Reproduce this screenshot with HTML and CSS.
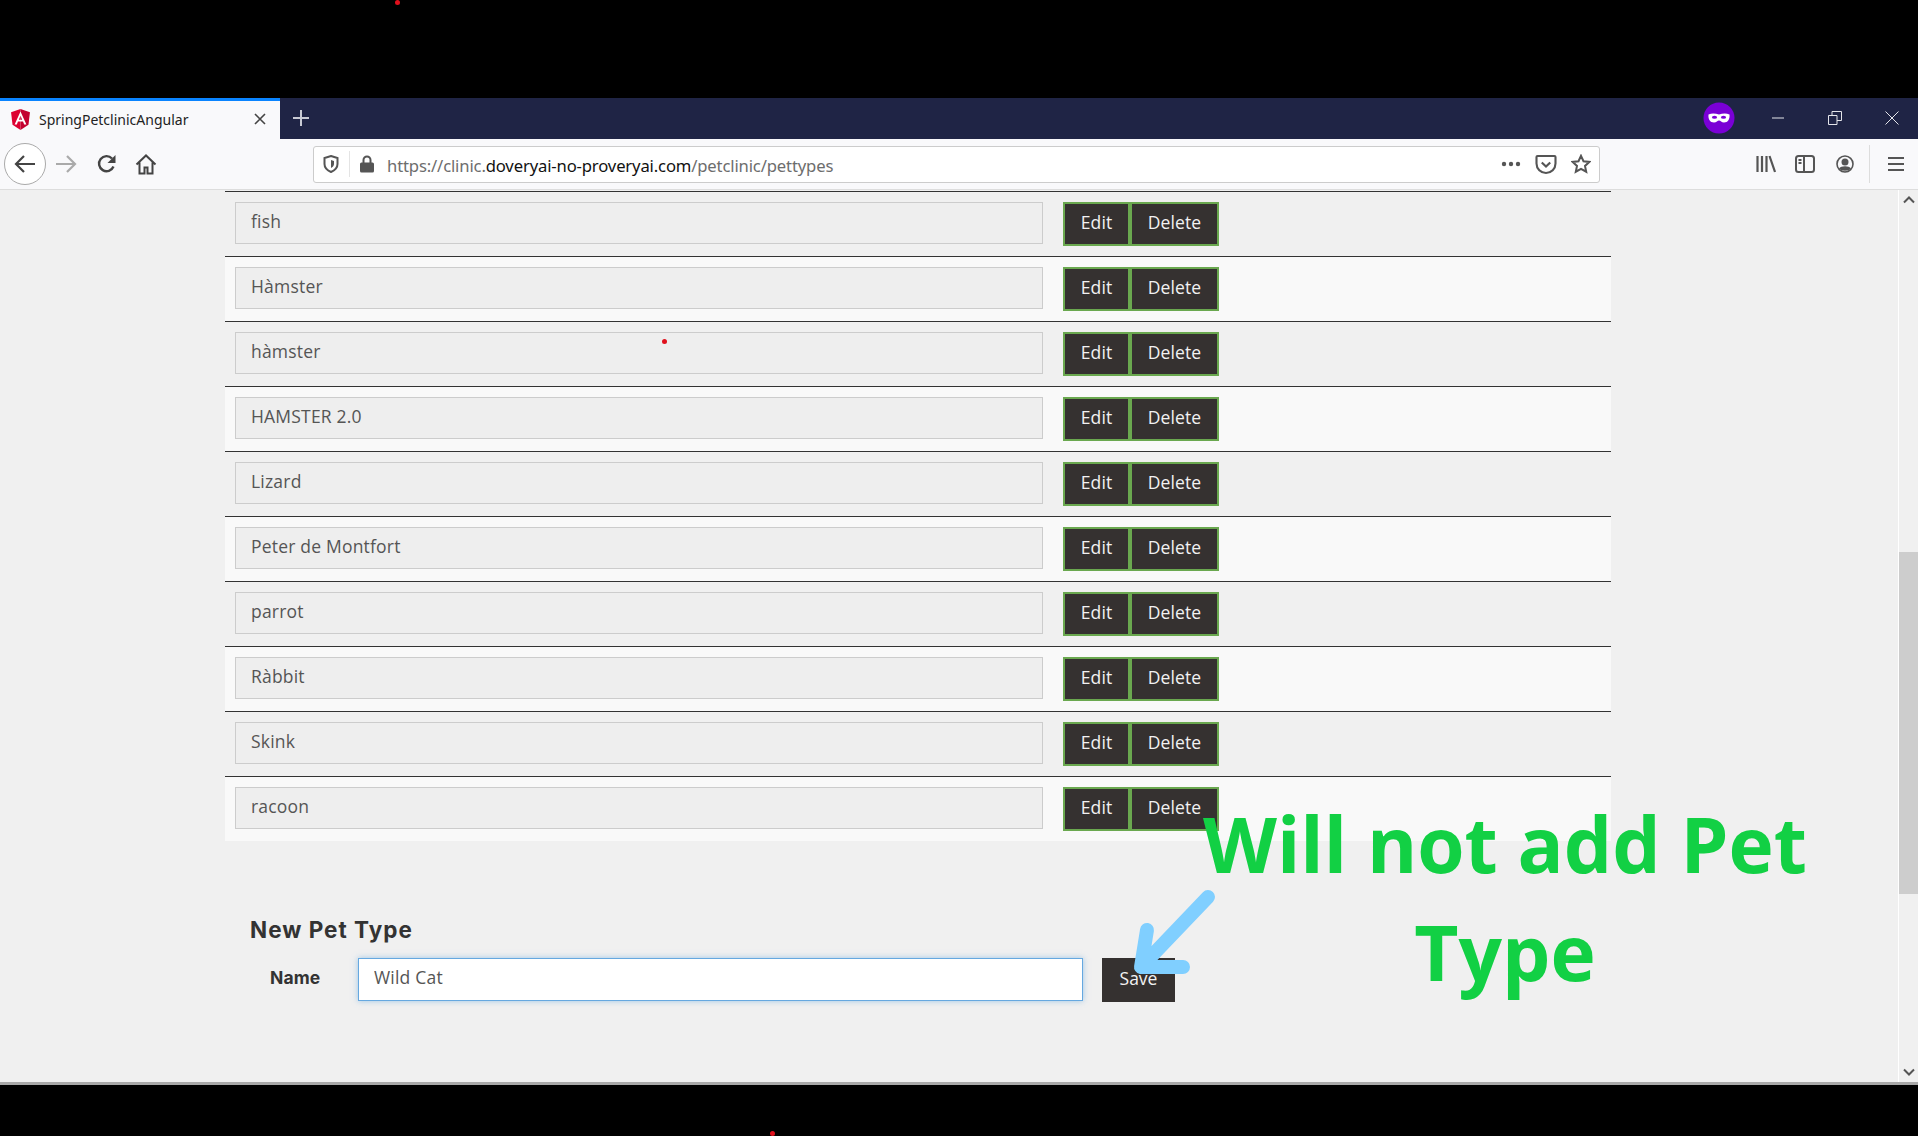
FILE: index.html
```html
<!DOCTYPE html>
<html>
  <head>
    <title>SpringPetclinicAngular</title>
    <link rel="stylesheet" href="styles.css">
  </head>
  <body>
    <div class="black-top"></div>

    <div class="tabbar">
      <div class="tab">
        <svg class="tab-logo" width="19" height="21" viewBox="0 0 18 20">
          <path d="M9 0L0 3.2l1.4 11.9L9 20z" fill="#dd0031"/>
          <path d="M9 0l9 3.2-1.4 11.9L9 20z" fill="#c3002f"/>
          <path d="M9 2.3L3.4 14.8h2.1l1.1-2.8h4.8l1.1 2.8h2.1zM10.6 10.3H7.4L9 6.5z" fill="#fff"/>
        </svg>
        <span class="tab-title">SpringPetclinicAngular</span>
        <svg class="tab-close" width="14" height="14" viewBox="0 0 14 14">
          <path d="M2 2l10 10M12 2L2 12" stroke="#444" stroke-width="1.6" fill="none"/>
        </svg>
      </div>
      <svg class="new-tab" width="18" height="18" viewBox="0 0 18 18">
        <path d="M9 1v16M1 9h16" stroke="#c8cad4" stroke-width="2" fill="none"/>
      </svg>
      <div class="tabbar-right">
        <svg class="mask" width="32" height="32" viewBox="0 0 32 32">
          <circle cx="16" cy="16" r="15.5" fill="#7a00d6"/>
          <path d="M5.5 12.5c3.500-1.500 7-1 10.500 0 3.500-1 7-1.500 10.500 0 .5 4.500-1.500 8-5.500 8-2.500 0-3.500-2-5-2s-2.500 2-5 2c-4 0-6-3.500-5.500-8z" fill="#fff"/>
          <ellipse cx="11.500" cy="15.200" rx="2.600" ry="1.500" fill="#7a00d6"/>
          <ellipse cx="20.500" cy="15.200" rx="2.600" ry="1.500" fill="#7a00d6"/>
        </svg>
        <svg class="win-btn win-min" width="14" height="14" viewBox="0 0 14 14">
          <path d="M1 7h12" stroke="#e4e5ea" stroke-width="1" fill="none"/>
        </svg>
        <svg class="win-btn win-restore" width="14" height="14" viewBox="0 0 14 14">
          <path d="M.5 4.500h8.500v9H.5zM4 4.500V.5h9.500v9H9" stroke="#e4e5ea" stroke-width="1" fill="none"/>
        </svg>
        <svg class="win-btn win-close" width="14" height="14" viewBox="0 0 14 14">
          <path d="M.5.5l13 13M13.500.5l-13 13" stroke="#e4e5ea" stroke-width="1" fill="none"/>
        </svg>
      </div>
    </div>

    <div class="toolbar">
      <div class="back-btn">
        <svg width="22" height="20" viewBox="0 0 22 20">
          <path d="M10 2L2 10l8 8M2 10h19" stroke="#444" stroke-width="2.200" fill="none"/>
        </svg>
      </div>
      <svg class="nav-icon forward" width="22" height="20" viewBox="0 0 22 20">
        <path d="M12 2l8 8-8 8M20 10H1" stroke="#aaa" stroke-width="2.200" fill="none"/>
      </svg>
      <svg class="nav-icon reload" width="20" height="20" viewBox="0 0 20 20">
        <path d="M16.500 12.500A7.500 7.500 0 1 1 15 4.500" stroke="#444" stroke-width="2.400" fill="none"/>
        <path d="M18.500 1v8h-8z" fill="#444"/>
      </svg>
      <svg class="nav-icon home" width="22" height="21" viewBox="0 0 22 21">
        <path d="M1.500 10.500L11 1.500l9.500 9M4.500 8.500V19.500h5v-6h3v6h5V8.500" stroke="#444" stroke-width="2" fill="none"/>
      </svg>
      <div class="urlbar">
        <svg class="shield" width="16" height="18" viewBox="0 0 16 18">
          <path d="M8 1l6.500 2v6c0 4-3 6.500-6.500 8-3.500-1.500-6.500-4-6.500-8V3z" stroke="#555" stroke-width="2" fill="none"/>
          <path d="M8 5l3 1v3c0 2-1.500 3-3 4z" fill="#555"/>
        </svg>
        <span class="url-sep"></span>
        <svg class="lock" width="14" height="18" viewBox="0 0 14 18">
          <path d="M3.500 8V5a3.500 3.500 0 0 1 7 0v3" stroke="#555" stroke-width="2" fill="none"/>
          <rect x="0" y="7.500" width="14" height="10" rx="1.500" fill="#555"/>
        </svg>
        <span class="url-text">https://clinic.<b>doveryai-no-proveryai.com</b>/petclinic/pettypes</span>
        <svg class="url-icon dots" width="20" height="6" viewBox="0 0 20 6">
          <circle cx="3" cy="3" r="2.200" fill="#555"/>
          <circle cx="10" cy="3" r="2.200" fill="#555"/>
          <circle cx="17" cy="3" r="2.200" fill="#555"/>
        </svg>
        <svg class="url-icon pocket" width="22" height="19" viewBox="0 0 20 18">
          <path d="M2 1h16a1 1 0 0 1 1 1v6a9 9 0 0 1-18 0V2a1 1 0 0 1 1-1z" stroke="#555" stroke-width="2" fill="none"/>
          <path d="M6 7l4 4 4-4" stroke="#555" stroke-width="2" fill="none"/>
        </svg>
        <svg class="url-icon star" width="20" height="20" viewBox="0 0 20 20">
          <path d="M10 1.800l2.500 5.400 5.800.7-4.300 4 1.200 5.800-5.200-2.900-5.200 2.900 1.200-5.800-4.300-4 5.800-.7z" stroke="#555" stroke-width="2" fill="none"/>
        </svg>
      </div>
      <div class="tools">
        <svg class="tool-library" width="20" height="18" viewBox="0 0 20 18">
          <path d="M1.500 1v16M6 1v16M10.500 1v16M13.500 1l5.500 16" stroke="#555" stroke-width="2.200" fill="none"/>
        </svg>
        <svg class="tool-sidebar" width="20" height="18" viewBox="0 0 20 18">
          <rect x="1" y="1" width="18" height="16" rx="2.500" stroke="#555" stroke-width="2" fill="none"/>
          <path d="M9 1v16M3.500 5h3M3.500 8h3" stroke="#555" stroke-width="2" fill="none"/>
        </svg>
        <svg class="tool-account" width="18" height="18" viewBox="0 0 18 18">
          <circle cx="9" cy="9" r="8" stroke="#555" stroke-width="1.600" fill="none"/>
          <circle cx="9" cy="7" r="3.500" fill="#555"/>
          <path d="M3 13.500c2-3 10-3 12 0-3 3-9 3-12 0z" fill="#555"/>
        </svg>
        <span class="tools-sep"></span>
        <svg class="menu" width="16" height="16" viewBox="0 0 16 16">
          <path d="M0 2h16M0 8h16M0 14h16" stroke="#555" stroke-width="2" fill="none"/>
        </svg>
      </div>
    </div>

    <div class="viewport">
      <div class="page">
        <div class="types">
          <div class="type-row">
            <input class="type-name" value="fish">
            <div class="row-btns"><button class="btn edit">Edit</button><button class="btn delete">Delete</button></div>
          </div>
          <div class="type-row">
            <input class="type-name" value="Hàmster">
            <div class="row-btns"><button class="btn edit">Edit</button><button class="btn delete">Delete</button></div>
          </div>
          <div class="type-row">
            <input class="type-name" value="hàmster">
            <div class="row-btns"><button class="btn edit">Edit</button><button class="btn delete">Delete</button></div>
          </div>
          <div class="type-row">
            <input class="type-name" value="HAMSTER 2.0">
            <div class="row-btns"><button class="btn edit">Edit</button><button class="btn delete">Delete</button></div>
          </div>
          <div class="type-row">
            <input class="type-name" value="Lizard">
            <div class="row-btns"><button class="btn edit">Edit</button><button class="btn delete">Delete</button></div>
          </div>
          <div class="type-row">
            <input class="type-name" value="Peter de Montfort">
            <div class="row-btns"><button class="btn edit">Edit</button><button class="btn delete">Delete</button></div>
          </div>
          <div class="type-row">
            <input class="type-name" value="parrot">
            <div class="row-btns"><button class="btn edit">Edit</button><button class="btn delete">Delete</button></div>
          </div>
          <div class="type-row">
            <input class="type-name" value="Ràbbit">
            <div class="row-btns"><button class="btn edit">Edit</button><button class="btn delete">Delete</button></div>
          </div>
          <div class="type-row">
            <input class="type-name" value="Skink">
            <div class="row-btns"><button class="btn edit">Edit</button><button class="btn delete">Delete</button></div>
          </div>
          <div class="type-row">
            <input class="type-name" value="racoon">
            <div class="row-btns"><button class="btn edit">Edit</button><button class="btn delete">Delete</button></div>
          </div>
        </div>

        <h2 class="new-title">New Pet Type</h2>
        <form class="new-form">
          <label class="new-label" for="new-name">Name</label>
          <input class="new-name" id="new-name" value="Wild Cat">
          <button class="save" type="button">Save</button>
        </form>
      </div>
      <div class="scrollbar">
        <svg class="scroll-arrow" width="12" height="8" viewBox="0 0 12 8">
          <path d="M1 6.500l5-5 5 5" stroke="#555" stroke-width="2" fill="none"/>
        </svg>
        <div class="scroll-track"><div class="scroll-thumb"></div></div>
        <svg class="scroll-arrow" width="12" height="8" viewBox="0 0 12 8">
          <path d="M1 1.500l5 5 5-5" stroke="#555" stroke-width="2" fill="none"/>
        </svg>
      </div>
    </div>

    <div class="black-bottom"></div>

    <!-- things drawn over the screenshot -->
    <div class="note">Will not add Pet<br>Type</div>
    <svg class="arrow" width="90" height="100" viewBox="0 0 90 100">
      <path d="M76 12L11 80M15 45L9 82H51" stroke="#80cfff" stroke-width="14" stroke-linecap="round" stroke-linejoin="round" fill="none"/>
    </svg>
    <span class="dot dot-1"></span>
    <span class="dot dot-2"></span>
    <span class="dot dot-3"></span>
  </body>
</html>
```

FILE: styles.css
```css
html,
body {
  margin: 0;
  height: 1136px;
  overflow: hidden;
}
body {
  position: relative;
  display: flex;
  flex-direction: column;
  background-color: #000;
  font-family: "Open Sans", Arial, sans-serif;
}
.black-top {
  height: 98px;
}
.black-bottom {
  height: 51px;
}

/* tab strip */
.tabbar {
  height: 41px;
  padding-bottom: 2px;
  background-color: #1f2445;
  display: flex;
  align-items: center;
  box-sizing: border-box;
}
.tab {
  width: 280px;
  height: 41px;
  margin-bottom: -2px;
  box-sizing: border-box;
  border-top: 3px solid #0a84ff;
  padding-bottom: 2px;
  background-color: #f9f9fb;
  display: flex;
  align-items: center;
  padding-left: 11px;
  color: #222;
}
.tab-title {
  margin-left: 9px;
  font-size: 14px;
  font-family: "Noto Sans", Arial, sans-serif;
  flex: 1;
}
.tab-close {
  margin-right: 13px;
}
.new-tab {
  margin-left: 12px;
}
.tabbar-right {
  margin-left: auto;
  display: flex;
  align-items: center;
}
.mask {
  margin-right: 36px;
}
.win-min {
  margin-right: 43px;
}
.win-restore {
  margin-right: 43px;
}
.win-close {
  margin-right: 19px;
}

/* address row */
.toolbar {
  height: 51px;
  box-sizing: border-box;
  background-color: #f9f9fb;
  border-bottom: 1px solid #ddd;
  display: flex;
  align-items: center;
  position: relative;
}
.back-btn {
  width: 40px;
  height: 40px;
  margin-left: 4px;
  border: 1px solid #aaa;
  border-radius: 50%;
  background-color: #fff;
  display: flex;
  align-items: center;
  justify-content: center;
}
.forward {
  margin-left: 9px;
}
.reload {
  margin-left: 20px;
}
.home {
  margin-left: 18px;
}
.urlbar {
  width: 1287px;
  height: 37px;
  margin-left: 156px;
  box-sizing: border-box;
  border: 1px solid #ccc;
  border-radius: 3px;
  background-color: #fff;
  display: flex;
  align-items: center;
  padding-left: 9px;
}
.url-sep {
  width: 1px;
  height: 26px;
  margin-left: 10px;
  background-color: #e4e4e4;
}
.lock {
  margin-left: 10px;
}
.url-text {
  margin-left: 13px;
  padding-top: 2px;
  font-size: 16.65px;
  font-family: "Noto Sans", Arial, sans-serif;
  color: #6d6d6d;
  letter-spacing: -0.15px;
  flex: 1;
}
.url-text b {
  font-weight: normal;
  color: #111;
}
.dots {
  margin-right: 14px;
}
.pocket {
  margin-right: 14px;
}
.star {
  margin-right: 8px;
}
.tools {
  display: flex;
  align-items: center;
  margin-left: 156px;
}
.tool-library {
  margin-right: 19px;
}
.tool-sidebar {
  margin-right: 21px;
}
.tool-account {
  margin-right: 15px;
}
.tools-sep {
  width: 1px;
  height: 38px;
  background-color: #ddd;
}
.menu {
  margin-left: 18px;
}

/* page inside the browser */
.viewport {
  height: 895px;
  display: flex;
  background-color: #f0f0f0;
  border-bottom: 3px solid #a8a8a8;
  box-sizing: border-box;
}
.page {
  flex: 1;
  padding: 1px 0 0 225px;
  color: #333;
}
.types {
  width: 1386px;
}
.type-row {
  height: 65px;
  box-sizing: border-box;
  border-top: 1px solid #333;
  padding: 10px 0 0 10px;
  display: flex;
  align-items: flex-start;
  background-color: #f0f0f0;
}
.type-row:nth-child(even) {
  background-color: #f9f9f9;
}
.type-name {
  width: 808px;
  height: 42px;
  box-sizing: border-box;
  border: 1px solid #ccc;
  background-color: #eee;
  padding: 0 15px 5px;
  font-family: "Open Sans", Arial, sans-serif;
  font-size: 17.500px;
  letter-spacing: 0.2px;
  color: #555;
  outline: none;
}
.row-btns {
  display: flex;
  margin-left: 20px;
}
.btn {
  height: 44px;
  box-sizing: border-box;
  border: 2px solid #6aa84f;
  background-color: #353130;
  color: #f2f2f2;
  font-family: "Open Sans", Arial, sans-serif;
  font-size: 17.500px;
  letter-spacing: 0.1px;
  padding: 0 0 4px;
}
.edit {
  width: 67px;
}
.delete {
  width: 89px;
}
.new-title {
  margin: 73px 0 0 25px;
  font-family: Inter, Arial, sans-serif;
  font-size: 22.500px;
  font-weight: 700;
  letter-spacing: 1px;
  line-height: 32px;
  color: #333;
}
.new-form {
  display: flex;
  align-items: flex-start;
  margin-top: 12px;
}
.new-label {
  width: 88px;
  margin-left: 45px;
  font-family: Inter, Arial, sans-serif;
  font-size: 17.500px;
  font-weight: 700;
  letter-spacing: 0.1px;
  line-height: 40px;
}
.new-name {
  width: 725px;
  height: 43px;
  box-sizing: border-box;
  border: 1px solid #66a8e0;
  background-color: #fff;
  box-shadow: 0 0 6px rgba(102, 168, 224, 0.6);
  padding: 0 15px 5px;
  font-family: "Open Sans", Arial, sans-serif;
  font-size: 17.500px;
  letter-spacing: 0.2px;
  color: #555;
  outline: none;
}
.save {
  width: 73px;
  height: 44px;
  margin-left: 19px;
  border: none;
  padding: 0 0 4px;
  background-color: #353130;
  color: #f2f2f2;
  font-family: "Open Sans", Arial, sans-serif;
  font-size: 17.500px;
}

/* scrollbar */
.scrollbar {
  width: 20px;
  box-sizing: border-box;
  border-left: 1px solid #fff;
  display: flex;
  flex-direction: column;
  align-items: center;
}
.scroll-arrow {
  flex: none;
  margin: 6px 0;
}
.scroll-track {
  flex: 1;
  width: 100%;
}
.scroll-thumb {
  height: 342px;
  margin-top: 342px;
  background-color: #cdcdcd;
}

/* overlay */
.note {
  position: absolute;
  left: 1105px;
  top: 789px;
  width: 800px;
  text-align: center;
  font-family: "Open Sans", Arial, sans-serif;
  font-size: 76.5px;
  font-weight: 700;
  line-height: 108px;
  color: #12d044;
}
.arrow {
  position: absolute;
  left: 1132px;
  top: 885px;
}
.dot {
  position: absolute;
  width: 5px;
  height: 5px;
  border-radius: 50%;
  background-color: #e0101c;
}
.dot-1 {
  left: 395px;
  top: 0;
}
.dot-2 {
  left: 662px;
  top: 339px;
}
.dot-3 {
  left: 770px;
  top: 1131px;
}
```
